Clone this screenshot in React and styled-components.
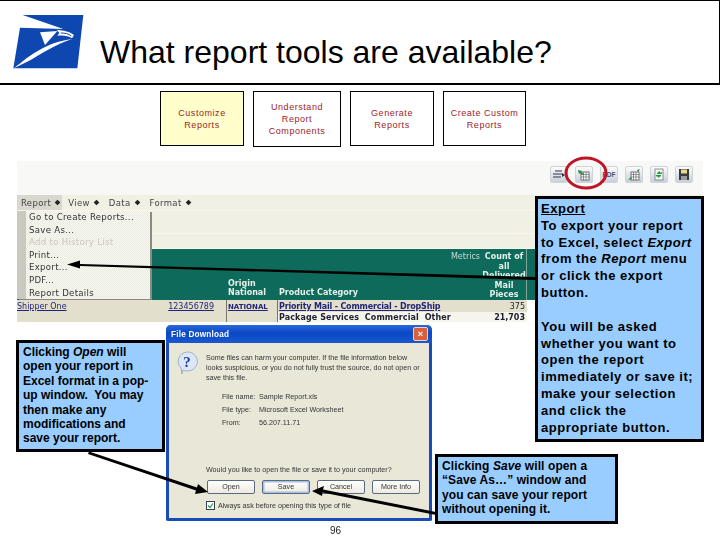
import React from 'react';
import styled, { createGlobalStyle, css } from 'styled-components';

const GlobalStyle = createGlobalStyle`
  html, body {
    margin: 0;
    background: #fff;
    font-family: "Liberation Sans", Arial, sans-serif;
  }
`;

const Slide = styled.div`
  position: relative;
  width: 720px;
  height: 540px;
  overflow: hidden;
  background: #fff;
`;

const Header = styled.header`
  display: flex;
  align-items: flex-start;
  box-sizing: border-box;
  height: 85px;
  border-top: 1px solid #000;
  border-right: 1px solid #000;
  border-bottom: 2px solid #000;
`;

const Logo = styled.svg`
  flex: none;
  width: 100px;
  height: 70px;
  margin-top: 4px;
`;

const Title = styled.h1`
  margin: 31px 0 0;
  font-size: 32px;
  line-height: 40px;
  font-weight: 400;
  color: #000;
  white-space: nowrap;
`;

const StepRow = styled.nav`
  display: flex;
  align-items: center;
  gap: 9px;
  margin: 5px 0 0 160px;
  height: 57px;
`;

const Step = styled.div`
  display: flex;
  align-items: center;
  justify-content: center;
  box-sizing: border-box;
  width: ${p => p.$w}px;
  height: ${p => p.$h || 55}px;
  border: 1px solid #000;
  background: ${p => (p.$active ? '#ffffcc' : '#fff')};
  color: #a01c28;
  font-size: 9px;
  line-height: 12px;
  letter-spacing: 0.55px;
  text-align: center;
`;

const Screenshot = styled.section`
  margin: 14px 17px 0;
  width: 686px;
  height: 161px;
  filter: blur(0.35px);
  position: relative;
  font-family: "DejaVu Sans", sans-serif;
`;

const Toolbar = styled.div`
  display: flex;
  align-items: flex-start;
  box-sizing: border-box;
  height: 34px;
  padding: 5px 10px 0 533px;
  gap: 7px;
  background: #f8f8f6;
`;

const ToolButton = styled.div`
  display: flex;
  align-items: center;
  justify-content: center;
  box-sizing: border-box;
  width: 18px;
  height: 17px;
  border: 1px solid #cfd3da;
  border-radius: 2px;
  background: linear-gradient(#fbfbfb, #c9d0dc);
  font: 700 6.5px "Liberation Sans", sans-serif;
  color: #4a5068;
`;

const MenuBar = styled.div`
  display: flex;
  box-sizing: border-box;
  height: 16px;
  background: #f1f0e4;
  border-bottom: 1px solid #f8f7ee;
  font-size: 8.5px;
  color: #444;
`;

const MenuTab = styled.div`
  display: flex;
  align-items: center;
  gap: 4px;
  box-sizing: border-box;
  padding: 0 ${p => (p.$open ? 2 : 6)}px 0 4px;
  margin-right: ${p => (p.$open ? 2 : 0)}px;
  background: ${p => (p.$open ? '#d8d8cf' : 'transparent')};
  letter-spacing: 0.35px;
  &::after {
    content: '';
    width: 5px;
    height: 5px;
    background: #222;
    transform: rotate(45deg) scale(0.8);
  }
`;

const Band = styled.div`
  box-sizing: border-box;
  height: ${p => p.$h}px;
  background: #f1f0e4;
  border-bottom: 1px solid #f8f7ee;
`;

const GreenHead = styled.div`
  display: grid;
  grid-template-columns: 209px 51px 205px 45px 1fr;
  box-sizing: border-box;
  height: 51px;
  background: #0e6a5a;
  color: #e6f0ea;
  font-size: 8px;
  line-height: 9.6px;
  font-weight: 700;
`;

const HeadCell = styled.div`
  display: flex;
  flex-direction: column;
  justify-content: flex-end;
  padding: 0 0 2px 2px;
  box-sizing: border-box;
  white-space: nowrap;
  ${p => p.$split && css`
    justify-content: space-between;
    padding-top: 3px;
  `}
  ${p => p.$center && css`
    text-align: center;
    border-right: 1px solid #7fa89b;
    padding: 3px 0 0;
    justify-content: flex-start;
  `}
`;

const MetricsLabel = styled.span`
  align-self: flex-end;
  padding-right: 2px;
  font-weight: 400;
  color: #c9ddd3;
`;

const DataRow = styled.div`
  display: grid;
  grid-template-columns: 209px 51px 205px 45px;
  height: ${p => p.$h}px;
  font-size: 8px;
  line-height: ${p => p.$h + 2}px;
  white-space: nowrap;
`;

const DataCell = styled.div`
  display: flex;
  justify-content: ${p => (p.$between ? 'space-between' : 'flex-start')};
  padding: 0 ${p => (p.$between ? 12 : 0)}px 0 ${p => (p.$flush ? 0 : 1)}px;
  overflow: hidden;
  box-sizing: border-box;
  background: ${p => p.$bg || '#e2e0cc'};
  border-left: ${p => (p.$line ? '1px solid #77756a' : 'none')};
  color: ${p => (p.$link ? '#23237a' : '#223')};
  font-size: ${p => p.$size || 8}px;
  letter-spacing: ${p => p.$track || 0}px;
  font-weight: ${p => (p.$bold ? 700 : 400)};
  text-decoration: ${p => (p.$link ? 'underline' : 'none')};
`;

const DataNumber = styled(DataCell)`
  justify-content: flex-end;
  padding: 0 2px 0 0;
  border-left: 0;
`;

const ReportMenu = styled.div`
  position: absolute;
  left: 0;
  top: 50px;
  width: 133px;
  height: 88px;
  box-sizing: border-box;
  padding: 0 0 0 12px;
  background:
    linear-gradient(90deg, #c9c9bf 9px, transparent 9px),
    repeating-conic-gradient(#f8f8f2 0 25%, #ecebdf 0 50%) 0 0 / 2px 2px;
  box-shadow: 2px 1px 0 #8a8a84;
`;

const MenuItem = styled.div`
  height: 12.6px;
  font-size: 8.6px;
  line-height: 12.6px;
  letter-spacing: 0.28px;
  color: ${p => (p.$off ? '#c8c8c0' : '#333')};
  white-space: nowrap;
`;

const Dialog = styled.div`
  position: absolute;
  left: 166px;
  top: 325px;
  box-sizing: border-box;
  width: 266px;
  height: 196px;
  display: flex;
  flex-direction: column;
  border: 3px solid #1a4cb8;
  border-top: 0;
  border-radius: 5px 5px 2px 2px;
  background: #e9e8d8;
  font-size: 7.15px;
  color: #333;
  filter: blur(0.3px);
`;

const DialogTitle = styled.div`
  display: flex;
  align-items: center;
  justify-content: space-between;
  flex: none;
  height: 18px;
  margin: 0 -3px;
  padding: 0 4px 0 5px;
  border-radius: 5px 5px 0 0;
  background: linear-gradient(#2a68dc, #0a48c4 45%, #1a58d0);
  color: #fff;
  font-size: 8.2px;
  font-weight: 700;
  letter-spacing: 0.2px;
`;

const CloseButton = styled.div`
  display: flex;
  align-items: center;
  justify-content: center;
  width: 13px;
  height: 12px;
  border: 1px solid #f0d0c8;
  border-radius: 2px;
  background: #d8603c;
  color: #fff;
  font-size: 9px;
`;

const DialogBody = styled.div`
  flex: 1;
  display: flex;
  flex-direction: column;
  padding: 10px 0 0 37px;
  position: relative;
`;

const Warning = styled.p`
  margin: 0 0 8px;
  line-height: 10px;
  white-space: nowrap;
`;

const QuestionIcon = styled.svg`
  position: absolute;
  left: 7px;
  top: 8px;
  width: 22px;
  height: 24px;
`;

const FileInfo = styled.dl`
  display: grid;
  grid-template-columns: 37px 1fr;
  grid-auto-rows: 13px;
  margin: 0 0 0 16px;
  line-height: 13px;
  dt, dd { margin: 0; }
`;

const Question = styled.p`
  margin: 35px 0 5px;
  line-height: 10px;
  white-space: nowrap;
`;

const DialogButtons = styled.div`
  display: flex;
  gap: 7px;
  margin-left: 1px;
`;

const DialogButton = styled.div`
  display: flex;
  align-items: center;
  justify-content: center;
  box-sizing: border-box;
  width: 48px;
  height: 14px;
  border: 1px solid #5a6a80;
  border-radius: 2px;
  background: linear-gradient(#fff, #eeeae0);
  box-shadow: ${p => (p.$focus ? 'inset 0 0 0 1.5px #a8c0e8' : 'none')};
`;

const CheckRow = styled.label`
  display: flex;
  align-items: center;
  gap: 3px;
  margin-top: 7px;
`;

const CheckBox = styled.svg`
  width: 9px;
  height: 9px;
`;

const Callout = styled.aside`
  position: absolute;
  box-sizing: border-box;
  border: 3px solid #000;
  background: #99ccff;
  color: #000;
  font-weight: 700;
  white-space: nowrap;
  p { margin: 0; }
`;

const ExportCallout = styled(Callout)`
  left: 535px;
  top: 196px;
  width: 169px;
  height: 246px;
  padding: 2px 0 0 3px;
  font-size: 13px;
  line-height: 16.8px;
  letter-spacing: 0.52px;
  p + p { margin-top: 17px; }
`;

const OpenCallout = styled(Callout)`
  left: 16px;
  top: 340px;
  width: 149px;
  height: 112px;
  padding: 2px 0 0 4px;
  font-size: 12px;
  line-height: 14.4px;
  letter-spacing: 0;
`;

const SaveCallout = styled(Callout)`
  left: 435px;
  top: 454px;
  width: 183px;
  height: 70px;
  padding: 2px 0 0 4px;
  font-size: 12px;
  line-height: 14.4px;
  letter-spacing: 0.1px;
`;

const Underlined = styled.span`
  text-decoration: underline;
`;

const PageNumber = styled.div`
  position: absolute;
  left: 330px;
  top: 525px;
  font-size: 10px;
  line-height: 11px;
  color: #222;
`;

const Overlay = styled.svg`
  position: absolute;
  left: 0;
  top: 0;
  width: 720px;
  height: 540px;
  pointer-events: none;
`;

const ToolIcon = ({ children }) => (
  <svg width="14" height="13" viewBox="0 0 14 13">{children}</svg>
);

const Sheet = () => (
  <>
    <rect x="4" y="4" width="8" height="8" fill="#fff" stroke="#555" strokeWidth="0.8" />
    <path d="M4 6.500h8M4 9h8M6.500 4v8M9 4v8" stroke="#555" strokeWidth="0.6" />
  </>
);

const App = () => (
  <Slide>
    <GlobalStyle />
    <Header>
      <Logo viewBox="0 0 300 210">
        <path d="M68 30H250L232 190H40L60 68L190 72Z" fill="#0f47b0" />
        <path d="M120 82L172 78L135 120Z" fill="#fff" />
        <path d="M170 74C190 76 212 80 222 90L216 100C205 92 190 90 172 92L178 84Z" fill="#fff" />
        <path d="M42 190C90 150 140 112 216 102C165 120 125 145 92 165Z" fill="#fff" />
        <path d="M182 84C195 84 206 86 214 93" stroke="#0f47b0" strokeWidth="3" fill="none" />
      </Logo>
      <Title>What report tools are available?</Title>
    </Header>

    <StepRow>
      <Step $w={84} $active>Customize<br />Reports</Step>
      <Step $w={88} $h={56}>Understand<br />Report<br />Components</Step>
      <Step $w={84}>Generate<br />Reports</Step>
      <Step $w={83}>Create Custom<br />Reports</Step>
    </StepRow>

    <Screenshot>
      <Toolbar>
        <ToolButton>
          <ToolIcon>
            <path d="M3 3h7M1 6h9M1 9h8" stroke="#334" strokeWidth="1.200" />
            <path d="M10 5l3 2-3 2z" fill="#334" />
          </ToolIcon>
        </ToolButton>
        <ToolButton>
          <ToolIcon>
            <Sheet />
            <path d="M1 2l4 1-1 1 3 2-2 1-2-2-1 1z" fill="#2a8a3c" />
          </ToolIcon>
        </ToolButton>
        <ToolButton>PDF</ToolButton>
        <ToolButton>
          <ToolIcon>
            <Sheet />
            <path d="M1 12l3-3 1 2zM13 1l-3 1 1 2z" fill="#2a8a3c" />
          </ToolIcon>
        </ToolButton>
        <ToolButton>
          <ToolIcon>
            <rect x="3" y="1" width="8" height="11" fill="#f4f8f0" stroke="#667" strokeWidth="0.7" />
            <path d="M5 5l3-2v1.500h2V6H5zM9 8l-3 2V8.500H4V7h5z" fill="#1c9a3c" />
          </ToolIcon>
        </ToolButton>
        <ToolButton>
          <ToolIcon>
            <rect x="2" y="1" width="10" height="11" fill="#3a3a3a" />
            <rect x="4" y="1.500" width="6" height="4" fill="#e8d890" />
            <rect x="4" y="8" width="6" height="4" fill="#9a9a9a" />
          </ToolIcon>
        </ToolButton>
      </Toolbar>
      <MenuBar>
        <MenuTab $open>Report</MenuTab>
        <MenuTab>View</MenuTab>
        <MenuTab>Data</MenuTab>
        <MenuTab>Format</MenuTab>
      </MenuBar>
      <Band $h={23} />
      <Band $h={15} />
      <GreenHead>
        <HeadCell />
        <HeadCell>Origin<br />National</HeadCell>
        <HeadCell $split>
          <MetricsLabel>Metrics</MetricsLabel>
          <span>Product Category</span>
        </HeadCell>
        <HeadCell $center>Count of<br />all<br />Delivered<br />Mail<br />Pieces</HeadCell>
        <HeadCell />
      </GreenHead>
      <DataRow $h={12}>
        <DataCell $link $flush $between>
          <span>Shipper One</span>
          <span>123456789</span>
        </DataCell>
        <DataCell $line $link $bold $size={7}>NATIONAL</DataCell>
        <DataCell $line $link $bold $track={-0.18}>Priority Mail - Commercial - DropShip</DataCell>
        <DataNumber>375</DataNumber>
      </DataRow>
      <DataRow $h={10}>
        <DataCell />
        <DataCell $line />
        <DataCell $line $bg="#f6f5ec" $bold $track={0.1}>Package Services&nbsp;&nbsp;Commercial&nbsp;&nbsp;Other</DataCell>
        <DataNumber $bg="#f6f5ec" $bold>21,703</DataNumber>
      </DataRow>
      <ReportMenu>
        <MenuItem>Go to Create Reports...</MenuItem>
        <MenuItem>Save As...</MenuItem>
        <MenuItem $off>Add to History List</MenuItem>
        <MenuItem>Print...</MenuItem>
        <MenuItem>Export...</MenuItem>
        <MenuItem>PDF...</MenuItem>
        <MenuItem>Report Details</MenuItem>
      </ReportMenu>
    </Screenshot>

    <Dialog>
      <DialogTitle>
        File Download
        <CloseButton>×</CloseButton>
      </DialogTitle>
      <DialogBody>
        <QuestionIcon viewBox="0 0 22 24">
          <path d="M11 1a10 9.500 0 1 1-4 18l-1 4-1-6A10 9.500 0 0 1 11 1z" fill="#dbe6f6" stroke="#9ab0cc" />
          <text x="11" y="16" textAnchor="middle" fontSize="15" fontWeight="700" fontFamily="Liberation Serif" fill="#1c3c9c">?</text>
        </QuestionIcon>
        <Warning>
          Some files can harm your computer. If the file information below<br />
          looks suspicious, or you do not fully trust the source, do not open or<br />
          save this file.
        </Warning>
        <FileInfo>
          <dt>File name:</dt><dd>Sample Report.xls</dd>
          <dt>File type:</dt><dd>Microsoft Excel Worksheet</dd>
          <dt>From:</dt><dd>56.207.11.71</dd>
        </FileInfo>
        <Question>Would you like to open the file or save it to your computer?</Question>
        <DialogButtons>
          <DialogButton>Open</DialogButton>
          <DialogButton $focus>Save</DialogButton>
          <DialogButton>Cancel</DialogButton>
          <DialogButton>More Info</DialogButton>
        </DialogButtons>
        <CheckRow>
          <CheckBox viewBox="0 0 9 9">
            <rect x="0.500" y="0.500" width="8" height="8" fill="#fff" stroke="#345" />
            <path d="M2 4.500l2 2 3-4" stroke="#2a9a3c" strokeWidth="1.200" fill="none" />
          </CheckBox>
          Always ask before opening this type of file
        </CheckRow>
      </DialogBody>
    </Dialog>

    <Overlay viewBox="0 0 720 540">
      <ellipse cx="586" cy="173" rx="20" ry="15" fill="none" stroke="#c01426" strokeWidth="3" />
      <path d="M535 277L80 264L80 260.500L67 264.500L80 268.500L80 266L535 280Z" fill="#000" />
      <path d="M89 451.500L197 487.500L198 484L208 492L195 494L196 490.500L88 454Z" fill="#000" />
      <path d="M436 512L323 489.500L324 486L312 491L322 496L322.500 492.500L436 515Z" fill="#000" />
    </Overlay>

    <ExportCallout>
      <p>
        <Underlined>Export</Underlined><br />
        To export your report<br />
        to Excel, select <em>Export</em><br />
        from the <em>Report</em> menu<br />
        or click the export<br />
        button.
      </p>
      <p>
        You will be asked<br />
        whether you want to<br />
        open the report<br />
        immediately or save it;<br />
        make your selection<br />
        and click the<br />
        appropriate button.
      </p>
    </ExportCallout>

    <OpenCallout>
      Clicking <em>Open</em> will<br />
      open your report in<br />
      Excel format in a pop-<br />
      up window.&nbsp; You may<br />
      then make any<br />
      modifications and<br />
      save your report.
    </OpenCallout>

    <SaveCallout>
      Clicking <em>Save</em> will open a<br />
      “Save As…” window and<br />
      you can save your report<br />
      without opening it.
    </SaveCallout>

    <PageNumber>96</PageNumber>
  </Slide>
);

export default App;
